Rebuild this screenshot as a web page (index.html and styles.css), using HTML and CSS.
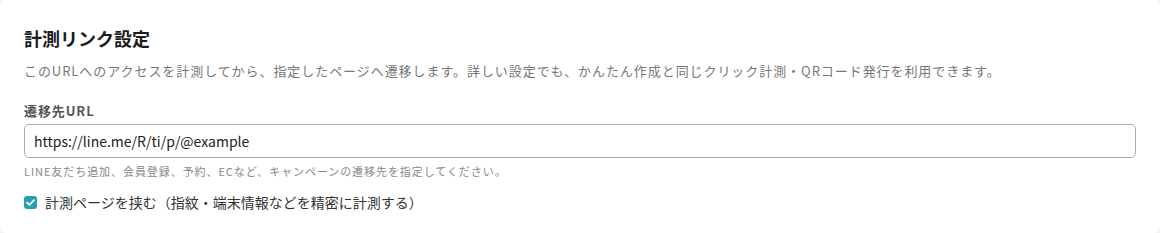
FILE: index.html
```html
<!DOCTYPE html>
<html lang="ja">
<head>
    <meta charset="UTF-8">
    <title>計測リンク設定</title>
    <link rel="stylesheet" href="styles.css">
</head>
<body>
<div class="card">
    <h2 class="card_title">計測リンク設定</h2>
    <p class="card_desc">このURLへのアクセスを計測してから、指定したページへ遷移します。詳しい設定でも、かんたん作成と同じクリック計測・QRコード発行を利用できます。</p>

    <div class="field">
        <label class="field_label" for="dest">遷移先URL</label>
        <input class="field_input" id="dest" type="text" value="https://line.me/R/ti/p/@example">
        <p class="field_help">LINE友だち追加、会員登録、予約、ECなど、キャンペーンの遷移先を指定してください。</p>
    </div>

    <label class="check">
        <span class="check_box">
            <svg width="9" height="7" viewBox="0 0 9 7"><path d="M1 3.6 L3.4 5.8 L8 1.2" fill="none" stroke="#fff" stroke-width="1.8" stroke-linecap="round" stroke-linejoin="round"/></svg>
        </span>
        <span class="check_text">計測ページを挟む（指紋・端末情報などを精密に計測する）</span>
    </label>
</div>
</body>
</html>
```

FILE: styles.css
```css
body, div, h2, p, label, input, span {
    margin: 0;
    padding: 0;
}

body {
    background-color: #f2f3f3;
    font-family: "Noto Sans CJK JP", "Noto Sans", sans-serif;
    color: #222;
}

.card {
    box-sizing: border-box;
    height: 233px;
    padding: 26px 24px 0;
    background-color: #fff;
    border-radius: 6px;
}

.card_title {
    font-size: 18px;
    font-weight: 700;
    line-height: 24px;
    color: #1c1c1c;
}

.card_desc {
    margin-top: 11px;
    font-size: 13px;
    line-height: 20px;
    letter-spacing: 0.072em;
    color: #777;
}

.field {
    margin-top: 21px;
}

.field_label {
    display: block;
    font-size: 13px;
    font-weight: 700;
    line-height: 18px;
    letter-spacing: 0.07em;
    color: #555;
}

.field_input {
    display: block;
    box-sizing: border-box;
    width: 100%;
    height: 34px;
    margin-top: 4px;
    padding: 0 9px;
    border: 1px solid #a3b1b3;
    border-radius: 5px;
    font-family: inherit;
    font-size: 14px;
    color: #222;
    outline: none;
}

.field_help {
    margin-top: 5px;
    font-size: 11px;
    line-height: 16px;
    letter-spacing: 0.085em;
    color: #888;
}

.check {
    display: flex;
    align-items: center;
    gap: 8px;
    margin-top: 13px;
    font-size: 14px;
    line-height: 20px;
    color: #333;
}

.check_box {
    display: flex;
    align-items: center;
    justify-content: center;
    width: 13px;
    height: 13px;
    border-radius: 3px;
    background-color: #2a9fb2;
}
```
